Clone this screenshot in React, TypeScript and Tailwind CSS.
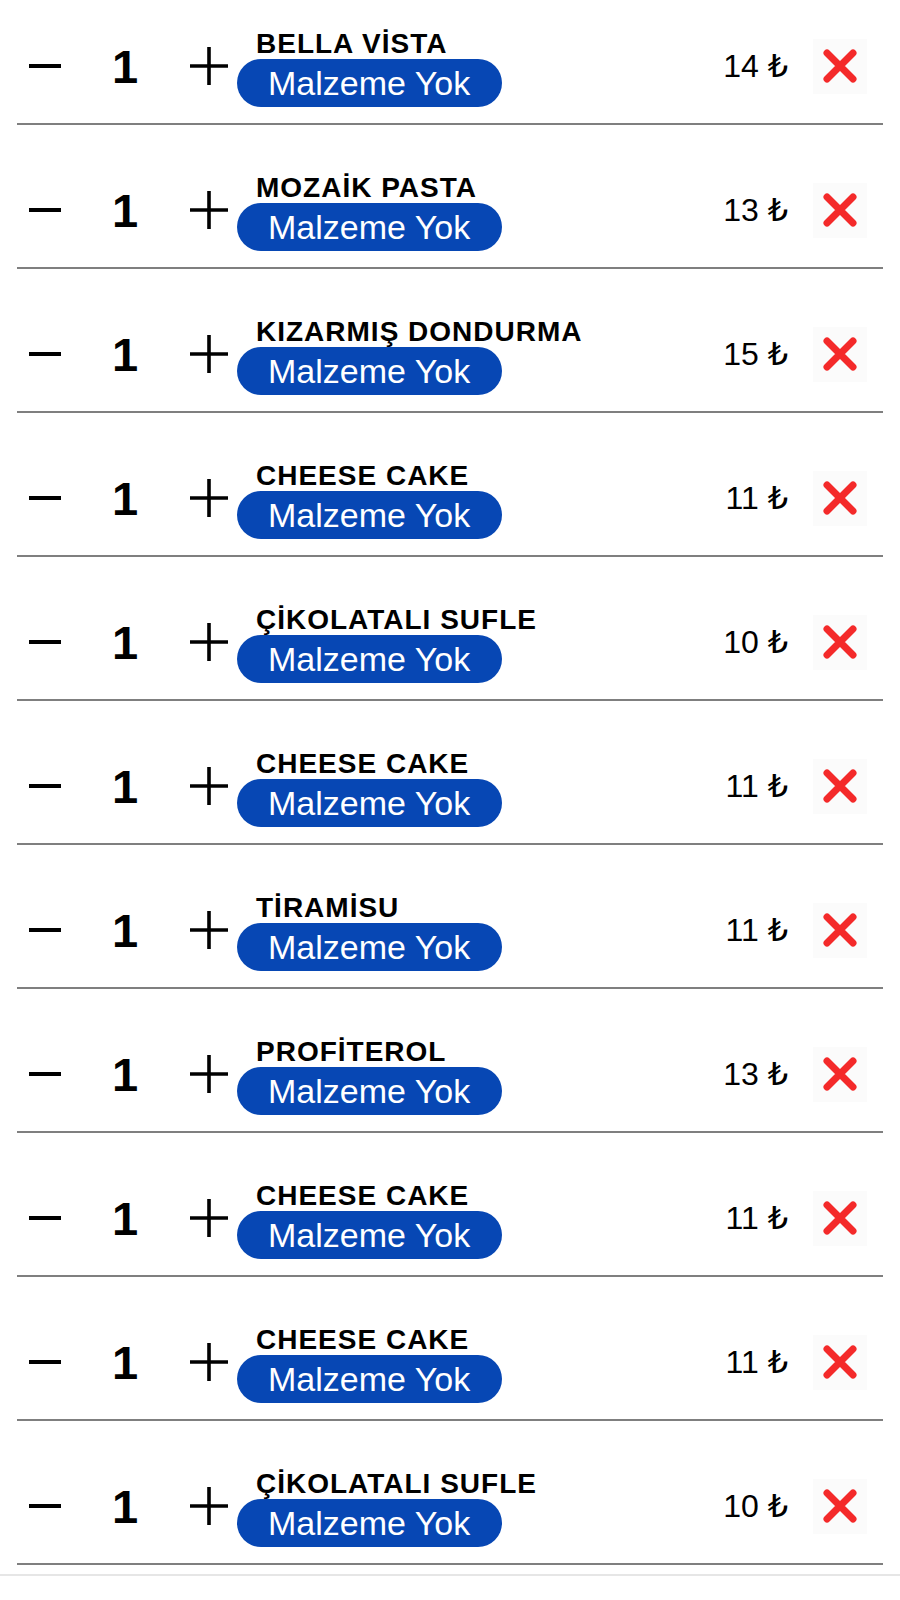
import React from "react";

type CartItem = {
  name: string;
  price: number;
};

const items: CartItem[] = [
  { name: "BELLA VİSTA", price: 14 },
  { name: "MOZAİK PASTA", price: 13 },
  { name: "KIZARMIŞ DONDURMA", price: 15 },
  { name: "CHEESE CAKE", price: 11 },
  { name: "ÇİKOLATALI SUFLE", price: 10 },
  { name: "CHEESE CAKE", price: 11 },
  { name: "TİRAMİSU", price: 11 },
  { name: "PROFİTEROL", price: 13 },
  { name: "CHEESE CAKE", price: 11 },
  { name: "CHEESE CAKE", price: 11 },
  { name: "ÇİKOLATALI SUFLE", price: 10 },
];

function MinusIcon() {
  return (
    <svg width="34" height="8" viewBox="0 0 34 8" className="block">
      <line x1="1" y1="4" x2="33" y2="4" stroke="#000" strokeWidth="4" />
    </svg>
  );
}

function PlusIcon() {
  return (
    <svg width="40" height="40" viewBox="0 0 40 40" className="block">
      <line x1="1" y1="20" x2="39" y2="20" stroke="#000" strokeWidth="3.6" />
      <line x1="20" y1="1" x2="20" y2="39" stroke="#000" strokeWidth="3.6" />
    </svg>
  );
}

function RemoveIcon() {
  return (
    <svg width="34" height="34" viewBox="0 0 34 34" className="block">
      <path
        d="M4 4 L30 30 M30 4 L4 30"
        stroke="#f42a2a"
        strokeWidth="7"
        strokeLinecap="round"
        fill="none"
      />
    </svg>
  );
}

function CartRow({ item }: { item: CartItem }) {
  return (
    <div className="mx-[17px] h-[144px] box-border border-b-2 border-[#7f7f7f] pt-[28px] flex items-center">
      {/* quantity controls */}
      <button className="ml-[11px] w-[34px] flex items-center justify-center">
        <MinusIcon />
      </button>
      <span className="ml-[33px] w-[60px] text-center text-[47px] font-bold leading-none text-black">
        1
      </span>
      <button className="ml-[34px] w-[40px] flex items-center justify-center">
        <PlusIcon />
      </button>

      {/* name + ingredients pill */}
      <div className="ml-[8px] pt-[5px] flex flex-col">
        <span className="ml-[19px] mb-[1px] text-[28px] font-bold leading-none tracking-[1px] text-black whitespace-nowrap">
          {item.name}
        </span>
        <span className="w-[265px] h-[48px] rounded-full bg-[#0747b4] pl-[31px] flex items-center text-[34px] leading-none text-white">
          Malzeme Yok
        </span>
      </div>

      {/* price + remove */}
      <span className="ml-auto text-[32px] leading-none text-black whitespace-nowrap">
        {item.price} ₺
      </span>
      <button className="ml-[25px] mr-[16px] w-[54px] h-[55px] bg-[#fbfbfb] flex items-center justify-center">
        <RemoveIcon />
      </button>
    </div>
  );
}

export default function App() {
  return (
    <div
      className="w-[900px] h-[1600px] overflow-hidden bg-white"
      style={{ fontFamily: '"Liberation Sans", "DejaVu Sans", Arial, sans-serif' }}
    >
      <div className="-mt-[19px]">
        {items.map((item, i) => (
          <CartRow key={i} item={item} />
        ))}
      </div>
      <div className="mt-[9px] border-t-2 border-[#e6e6e6]" />
    </div>
  );
}
